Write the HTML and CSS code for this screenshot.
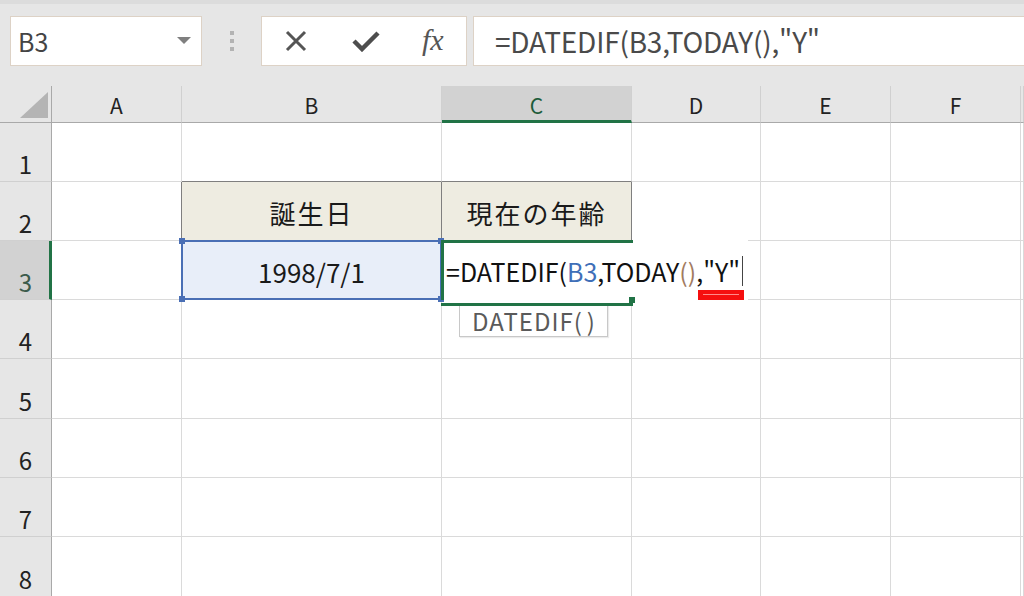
FILE: index.html
```html
<!DOCTYPE html>
<html lang="ja">

<head>
    <meta charset="UTF-8">
    <meta name="viewport" content="width=device-width, initial-scale=1.0">
    <title>DATEDIF</title>
    <link rel="stylesheet" href="styles.css">
</head>

<body>
    <!-- 数式バー -->
    <div class="topbar">
        <div class="namebox">
            <span>B3</span>
            <i class="caret"></i>
        </div>
        <div class="grip"><i></i><i></i><i></i></div>
        <div class="fx-buttons">
            <svg class="ico-cancel" width="24" height="22" viewBox="0 0 24 22">
                <path d="M3 2 L21 20 M21 2 L3 20" stroke="#555" stroke-width="3" fill="none" />
            </svg>
            <svg class="ico-enter" width="28" height="22" viewBox="0 0 28 22">
                <path d="M2 11 L10 19 L26 3" stroke="#4d4d4d" stroke-width="4.5" fill="none" stroke-linejoin="miter" />
            </svg>
            <span class="fx">fx</span>
        </div>
        <div class="formula">=DATEDIF(B3,TODAY(),"Y"</div>
    </div>

    <!-- シート -->
    <div class="sheet">
        <div class="hd corner"><i></i></div>
        <div class="hd">A</div>
        <div class="hd">B</div>
        <div class="hd active-col">C</div>
        <div class="hd">D</div>
        <div class="hd">E</div>
        <div class="hd">F</div>
        <div class="hd"></div>

        <div class="rh">1</div>
        <div class="c"></div>
        <div class="c edge-b"></div>
        <div class="c edge-b"></div>
        <div class="c"></div>
        <div class="c"></div>
        <div class="c"></div>
        <div class="c"></div>

        <div class="rh">2</div>
        <div class="c edge-r"></div>
        <div class="c title">誕生日</div>
        <div class="c title">現在の年齢</div>
        <div class="c"></div>
        <div class="c"></div>
        <div class="c"></div>
        <div class="c"></div>

        <div class="rh active-row">3</div>
        <div class="c"></div>
        <div class="c selected">
            1998/7/1
            <i class="handle tl"></i><i class="handle tr"></i>
            <i class="handle bl"></i><i class="handle br"></i>
        </div>
        <div class="c editing">
            <div class="editor">
                =DATEDIF(<span class="ref">B3</span>,TODAY<span class="paren">()</span>,"Y"<i class="cursor"></i>
            </div>
            <i class="fill-handle"></i>
            <div class="tip">DATEDIF<span class="tip-paren">()</span></div>
        </div>
        <div class="c"></div>
        <div class="c"></div>
        <div class="c"></div>
        <div class="c"></div>

        <div class="rh">4</div>
        <div class="c"></div><div class="c"></div><div class="c"></div><div class="c"></div><div class="c"></div><div class="c"></div><div class="c"></div>
        <div class="rh">5</div>
        <div class="c"></div><div class="c"></div><div class="c"></div><div class="c"></div><div class="c"></div><div class="c"></div><div class="c"></div>
        <div class="rh">6</div>
        <div class="c"></div><div class="c"></div><div class="c"></div><div class="c"></div><div class="c"></div><div class="c"></div><div class="c"></div>
        <div class="rh">7</div>
        <div class="c"></div><div class="c"></div><div class="c"></div><div class="c"></div><div class="c"></div><div class="c"></div><div class="c"></div>
        <div class="rh">8</div>
        <div class="c"></div><div class="c"></div><div class="c"></div><div class="c"></div><div class="c"></div><div class="c"></div><div class="c"></div>

        <!-- 赤い下線 -->
        <div class="mark"></div>
    </div>
</body>

</html>
```

FILE: styles.css
```css
* {
    margin: 0;
    padding: 0;
    box-sizing: border-box;
}

body {
    width: 1024px;
    height: 596px;
    overflow: hidden;
    background: #fff;
    font-family: "Noto Sans CJK JP", sans-serif;
    color: #1a1a1a;
}

/* 数式バー */
.topbar {
    display: flex;
    align-items: flex-start;
    height: 86px;
    padding-top: 12px;
    background: #e6e6e6;
    border-top: 4px solid #dcdcdc;
}

.namebox,
.fx-buttons,
.formula {
    height: 50px;
    background: #fff;
    border: 1px solid #ddd2c6;
}

.namebox {
    display: flex;
    align-items: center;
    justify-content: space-between;
    width: 192px;
    margin-left: 10px;
    padding: 0 10px 0 7px;
    font-size: 25px;
    color: #444;
}

.caret {
    width: 0;
    height: 0;
    border-left: 7px solid transparent;
    border-right: 7px solid transparent;
    border-top: 7px solid #7f7f7f;
    margin-top: -2px;
}

.grip {
    display: flex;
    flex-direction: column;
    align-items: center;
    gap: 4px;
    width: 59px;
    padding-top: 15px;
}

.grip i {
    width: 4px;
    height: 4px;
    background: #b3b3b3;
}

.fx-buttons {
    display: flex;
    align-items: center;
    width: 206px;
    padding-left: 22px;
}

.ico-cancel {
    margin-right: 44px;
}

.ico-enter {
    margin-right: 42px;
}

.fx {
    font-family: "Liberation Serif", serif;
    font-style: italic;
    font-size: 30px;
    color: #555;
    margin-top: -2px;
}

.formula {
    flex: 1;
    margin-left: 6px;
    margin-right: -2px;
    display: flex;
    align-items: center;
    padding-left: 21px;
    font-size: 28px;
    color: #4a4a4a;
    letter-spacing: -0.2px;
}

/* シート */
.sheet {
    position: relative;
    display: grid;
    grid-template-columns: 52px 130px 260px 190px 129px 130px 130px 1fr;
    grid-template-rows: 37px 59px 59px 59px 59px 60px 59px 59px 60px;
}

.hd {
    display: flex;
    align-items: center;
    justify-content: center;
    background: #e6e6e6;
    border-right: 1px solid #d0d0d0;
    border-bottom: 1px solid #a9a9a9;
    font-size: 21px;
    color: #222;
    padding-top: 2px;
}

.corner {
    align-items: flex-end;
    justify-content: flex-end;
    padding: 0 3px 4px 0;
    border-right: 1px solid #a9a9a9;
}

.corner i {
    width: 28px;
    height: 26px;
    background: #b4b4b4;
    clip-path: polygon(100% 0, 100% 100%, 0 100%);
}

.active-col {
    background: #d2d2d2;
    border-bottom: 3px solid #217346;
    color: #1d5c3a;
    padding-top: 4px;
}

.rh {
    display: flex;
    align-items: flex-end;
    justify-content: center;
    padding-bottom: 0;
    background: #e6e6e6;
    border-right: 1px solid #a9a9a9;
    border-bottom: 1px solid #d0d0d0;
    font-size: 24px;
    color: #222;
}

.active-row {
    background: #d2d2d2;
    border-right: 3px solid #217346;
    color: #3b5b4b;
    padding-left: 2px;
}

.c {
    position: relative;
    display: flex;
    align-items: center;
    justify-content: center;
    border-right: 1px solid #dadada;
    border-bottom: 1px solid #dadada;
    font-size: 26px;
    padding-top: 3px;
}

.edge-b {
    border-bottom-color: #7f7f7f;
}

.edge-r {
    border-right-color: #7f7f7f;
}

.title {
    background: #eeece1;
    border-right-color: #7f7f7f;
    border-bottom-color: #7f7f7f;
    letter-spacing: 2px;
}

/* 選択中のB3 */
.selected {
    background: #e8eef9;
}

.selected::after {
    content: "";
    position: absolute;
    top: -1px;
    left: -1px;
    right: -1px;
    bottom: -1px;
    border: 2px solid #4a6fb5;
}

.handle {
    position: absolute;
    width: 6px;
    height: 6px;
    background: #4a6fb5;
    z-index: 2;
}

.tl { top: -3px; left: -3px; }
.tr { top: -3px; right: -3px; }
.bl { bottom: -3px; left: -3px; }
.br { bottom: -3px; right: -3px; }

/* 編集中のC3 */
.editing {
    border-right-color: #fff;
    border-bottom-color: #217346;
}

.editor {
    position: absolute;
    top: -1px;
    left: -1px;
    height: 60px;
    padding: 2px 5px 0 2px;
    display: flex;
    align-items: center;
    white-space: nowrap;
    background: #fff;
    border-left: 3px solid #217346;
    font-size: 25px;
    color: #111;
    z-index: 3;
}

.editing::before {
    content: "";
    position: absolute;
    top: -1px;
    left: -1px;
    width: 192px;
    height: 60px;
    border-top: 3px solid #217346;
    border-bottom: 3px solid #217346;
    z-index: 4;
}

.ref {
    color: #3f6fb8;
}

.paren {
    color: #a27b5f;
}

.cursor {
    display: inline-block;
    width: 1px;
    height: 30px;
    margin-left: 2px;
    background: #444;
}

.fill-handle {
    position: absolute;
    right: -4px;
    bottom: -4px;
    width: 6px;
    height: 6px;
    background: #217346;
    z-index: 5;
}

.tip {
    position: absolute;
    top: 62px;
    left: 17px;
    width: 149px;
    height: 34px;
    padding-left: 12px;
    display: flex;
    align-items: center;
    background: #fff;
    border: 1px solid #c8c8c8;
    box-shadow: 1px 1px 1px rgba(0, 0, 0, .08);
    font-size: 24px;
    letter-spacing: 1px;
    color: #5a5a5a;
    z-index: 3;
}

.tip-paren {
    letter-spacing: 5px;
}

.mark {
    position: absolute;
    left: 698px;
    top: 204px;
    width: 46px;
    height: 10px;
    background: #f50f0f;
    z-index: 6;
}

.mark::after {
    content: "";
    position: absolute;
    left: 5px;
    right: 5px;
    top: 4px;
    height: 1px;
    background: #ff8a8a;
}
```
